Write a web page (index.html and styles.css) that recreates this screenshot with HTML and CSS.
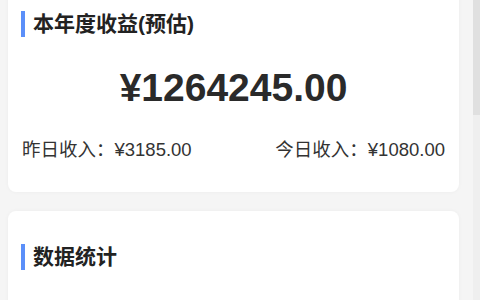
FILE: index.html
```html
<!DOCTYPE html>
<html lang="zh-CN">
<head>
    <meta charset="UTF-8">
    <meta name="viewport" content="width=device-width, initial-scale=1.0">
    <title>收益统计</title>
    <link rel="stylesheet" href="styles.css">
</head>
<body>
    <div class="layout">
        <div class="page">
            <div class="card">
                <h2 class="card-title">本年度收益(预估)</h2>
                <div class="total">¥1264245.00</div>
                <div class="income-row">
                    <span>昨日收入：¥3185.00</span>
                    <span>今日收入：¥1080.00</span>
                </div>
            </div>
            <div class="card">
                <h2 class="card-title">数据统计</h2>
                <div class="chart-area"></div>
            </div>
        </div>
        <div class="scrollbar">
            <div class="scrollbar-thumb"></div>
        </div>
    </div>
</body>
</html>
```

FILE: styles.css
```css
html, body {
    margin: 0;
    padding: 0;
    height: 100%;
    overflow: hidden;
}
body {
    font-family: "Liberation Sans", "Noto Sans CJK SC", sans-serif;
    background-color: #f5f5f5;
    color: #333;
}
.layout {
    display: flex;
    height: 100%;
}
.page {
    flex: 1;
    padding: 0 14px 0 8px;
    margin-top: -22px; /* page is scrolled a little */
    display: flex;
    flex-direction: column;
    gap: 19px;
}
.card {
    background-color: #fff;
    border-radius: 8px;
    box-shadow: 0 0 4px rgba(0, 0, 0, 0.04);
    padding: 33px 14px 30px;
}
.card-title {
    display: flex;
    align-items: center;
    margin: 0;
    font-size: 21px;
    font-weight: bold;
    line-height: 26px;
    color: #222;
}
.card-title::before {
    content: "";
    width: 4px;
    height: 26px;
    background-color: #5b8ff9;
    margin-left: -1px;
    margin-right: 8px;
}
.total {
    margin-top: 28px;
    text-align: center;
    font-size: 39px;
    font-weight: bold;
    line-height: 46px;
    color: #2a2a2a;
}
.income-row {
    display: flex;
    justify-content: space-between;
    margin-top: 27px;
    font-size: 18.5px;
    line-height: 24px;
}
.chart-area {
    height: 200px;
}
.scrollbar {
    width: 7px;
    background-color: #efefef;
}
.scrollbar-thumb {
    height: 115px;
    background-color: #e0e0e0;
}
```
